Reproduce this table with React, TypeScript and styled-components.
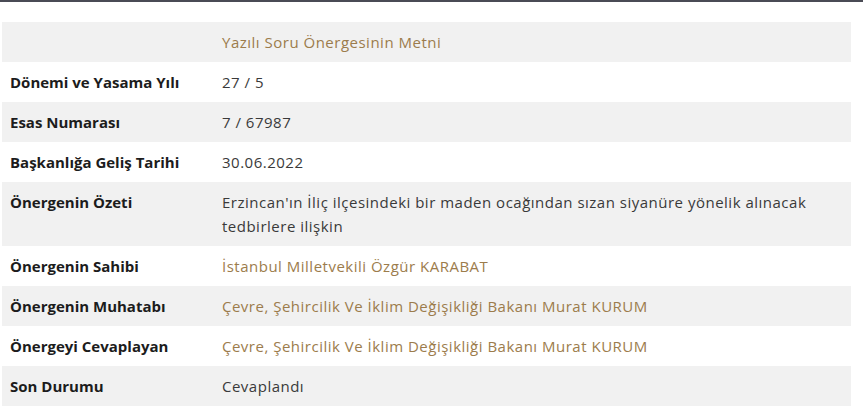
import React from "react";
import styled, { createGlobalStyle } from "styled-components";

interface iRow {
  label: string;
  value: string;
  link?: boolean;
}

const rows: iRow[] = [
  { label: "", value: "Yazılı Soru Önergesinin Metni", link: true },
  { label: "Dönemi ve Yasama Yılı", value: "27 / 5" },
  { label: "Esas Numarası", value: "7 / 67987" },
  { label: "Başkanlığa Geliş Tarihi", value: "30.06.2022" },
  {
    label: "Önergenin Özeti",
    value:
      "Erzincan'ın İliç ilçesindeki bir maden ocağından sızan siyanüre yönelik alınacak tedbirlere ilişkin",
  },
  { label: "Önergenin Sahibi", value: "İstanbul Milletvekili Özgür KARABAT", link: true },
  {
    label: "Önergenin Muhatabı",
    value: "Çevre, Şehircilik Ve İklim Değişikliği Bakanı Murat KURUM",
    link: true,
  },
  {
    label: "Önergeyi Cevaplayan",
    value: "Çevre, Şehircilik Ve İklim Değişikliği Bakanı Murat KURUM",
    link: true,
  },
  { label: "Son Durumu", value: "Cevaplandı" },
];

const App: React.FC = () => {
  return (
    <>
      <Global />
      <TopBar />
      <Wrap>
        <Table>
          <tbody>
            {rows.map((r, i) => (
              <Row key={i} odd={i % 2 === 0}>
                <Label>{r.label}</Label>
                <Value link={r.link}>{r.value}</Value>
              </Row>
            ))}
          </tbody>
        </Table>
      </Wrap>
    </>
  );
};

export default App;

const Global = createGlobalStyle`
  body {
    margin: 0;
    background: #fff;
    font-family: "Open Sans", Lato, sans-serif;
  }
`;

const TopBar = styled.div`
  height: 2px;
  background: #4a4b55;
`;

const Wrap = styled.div`
  padding: 20px 12px 0 2px;
`;

const Table = styled.table`
  width: 849px;
  border-collapse: collapse;
  font-size: 15px;
  line-height: 24px;
`;

const Row = styled.tr<{ odd: boolean }>`
  background: ${({ odd }) => (odd ? "#f1f1f1" : "#fff")};
`;

const Label = styled.td`
  width: 196px;
  padding: 8px;
  vertical-align: top;
  font-weight: bold;
  color: #1c1c1c;
`;

const Value = styled.td<{ link?: boolean }>`
  padding: 8px;
  vertical-align: top;
  letter-spacing: 0.5px;
  color: ${({ link }) => (link ? "#9c7c4c" : "#3a3a3a")};
`;
